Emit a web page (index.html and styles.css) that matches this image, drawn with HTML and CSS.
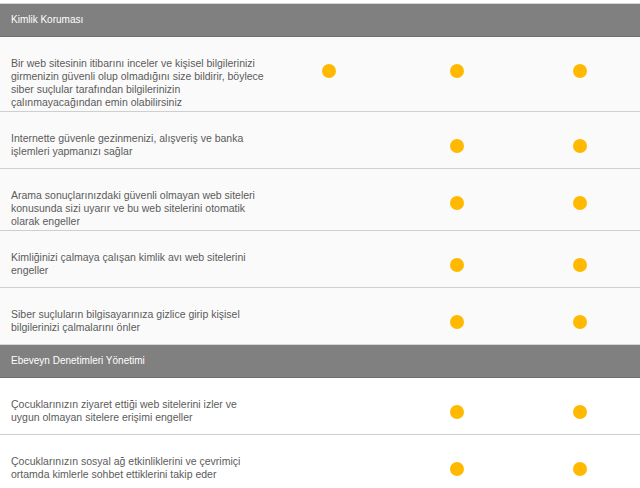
FILE: index.html
```html
<!DOCTYPE html>
<html lang="tr">
<head>
<meta charset="utf-8">
<link rel="stylesheet" href="styles.css">
</head>
<body>
<div class="page">
  <section class="group">
    <div class="group-head">Kimlik Koruması</div>
    <div class="row">
      <div class="desc">Bir web sitesinin itibarını inceler ve kişisel bilgilerinizi girmenizin güvenli olup olmadığını size bildirir, böylece siber suçlular tarafından bilgilerinizin çalınmayacağından emin olabilirsiniz</div>
      <div class="cell"><span class="dot"></span></div>
      <div class="cell"><span class="dot"></span></div>
      <div class="cell"><span class="dot"></span></div>
    </div>
    <div class="row">
      <div class="desc">Internette güvenle gezinmenizi, alışveriş ve banka işlemleri yapmanızı sağlar</div>
      <div class="cell"></div>
      <div class="cell"><span class="dot"></span></div>
      <div class="cell"><span class="dot"></span></div>
    </div>
    <div class="row">
      <div class="desc">Arama sonuçlarınızdaki güvenli olmayan web siteleri konusunda sizi uyarır ve bu web sitelerini otomatik olarak engeller</div>
      <div class="cell"></div>
      <div class="cell"><span class="dot"></span></div>
      <div class="cell"><span class="dot"></span></div>
    </div>
    <div class="row">
      <div class="desc">Kimliğinizi çalmaya çalışan kimlik avı web sitelerini engeller</div>
      <div class="cell"></div>
      <div class="cell"><span class="dot"></span></div>
      <div class="cell"><span class="dot"></span></div>
    </div>
    <div class="row last">
      <div class="desc">Siber suçluların bilgisayarınıza gizlice girip kişisel bilgilerinizi çalmalarını önler</div>
      <div class="cell"></div>
      <div class="cell"><span class="dot"></span></div>
      <div class="cell"><span class="dot"></span></div>
    </div>
  </section>
  <section class="group">
    <div class="group-head">Ebeveyn Denetimleri Yönetimi</div>
    <div class="row white">
      <div class="desc">Çocuklarınızın ziyaret ettiği web sitelerini izler ve uygun olmayan sitelere erişimi engeller</div>
      <div class="cell"></div>
      <div class="cell"><span class="dot"></span></div>
      <div class="cell"><span class="dot"></span></div>
    </div>
    <div class="row white">
      <div class="desc">Çocuklarınızın sosyal ağ etkinliklerini ve çevrimiçi ortamda kimlerle sohbet ettiklerini takip eder</div>
      <div class="cell"></div>
      <div class="cell"><span class="dot"></span></div>
      <div class="cell"><span class="dot"></span></div>
    </div>
  </section>
</div>
</body>
</html>
```

FILE: styles.css
```css
html, body {
  margin: 0;
  padding: 0;
  background: #ffffff;
}

.page {
  padding-top: 3px;
  font-family: "Liberation Sans", Arial, sans-serif;
  width: 640px;
}

.group-head {
  height: 32px;
  background: #808080;
  border-top: 1px solid #d6d6d6;
  border-bottom: 1px solid #6e6e6e;
  color: #ffffff;
  font-size: 10px;
  line-height: 32px;
  padding-left: 11px;
}

.row {
  display: grid;
  grid-template-columns: 274px 110px 146px 100px 10px;
  background: #fafafa;
  border-bottom: 1px solid #cfcfcf;
  box-shadow: 0 1px 0 #ececec;
  min-height: 56px;
}

.row.last {
  border-bottom: none;
  box-shadow: none;
}

.row.white {
  background: #ffffff;
}

.desc {
  padding: 20px 0 2px 11px;
  width: 255px;
  font-size: 10.5px;
  line-height: 13px;
  color: #5b5b5b;
}

.cell {
  display: flex;
  justify-content: center;
  align-items: flex-start;
  padding-top: 27px;
}

.dot {
  width: 14px;
  height: 14px;
  border-radius: 50%;
  background: #ffb900;
}
```
